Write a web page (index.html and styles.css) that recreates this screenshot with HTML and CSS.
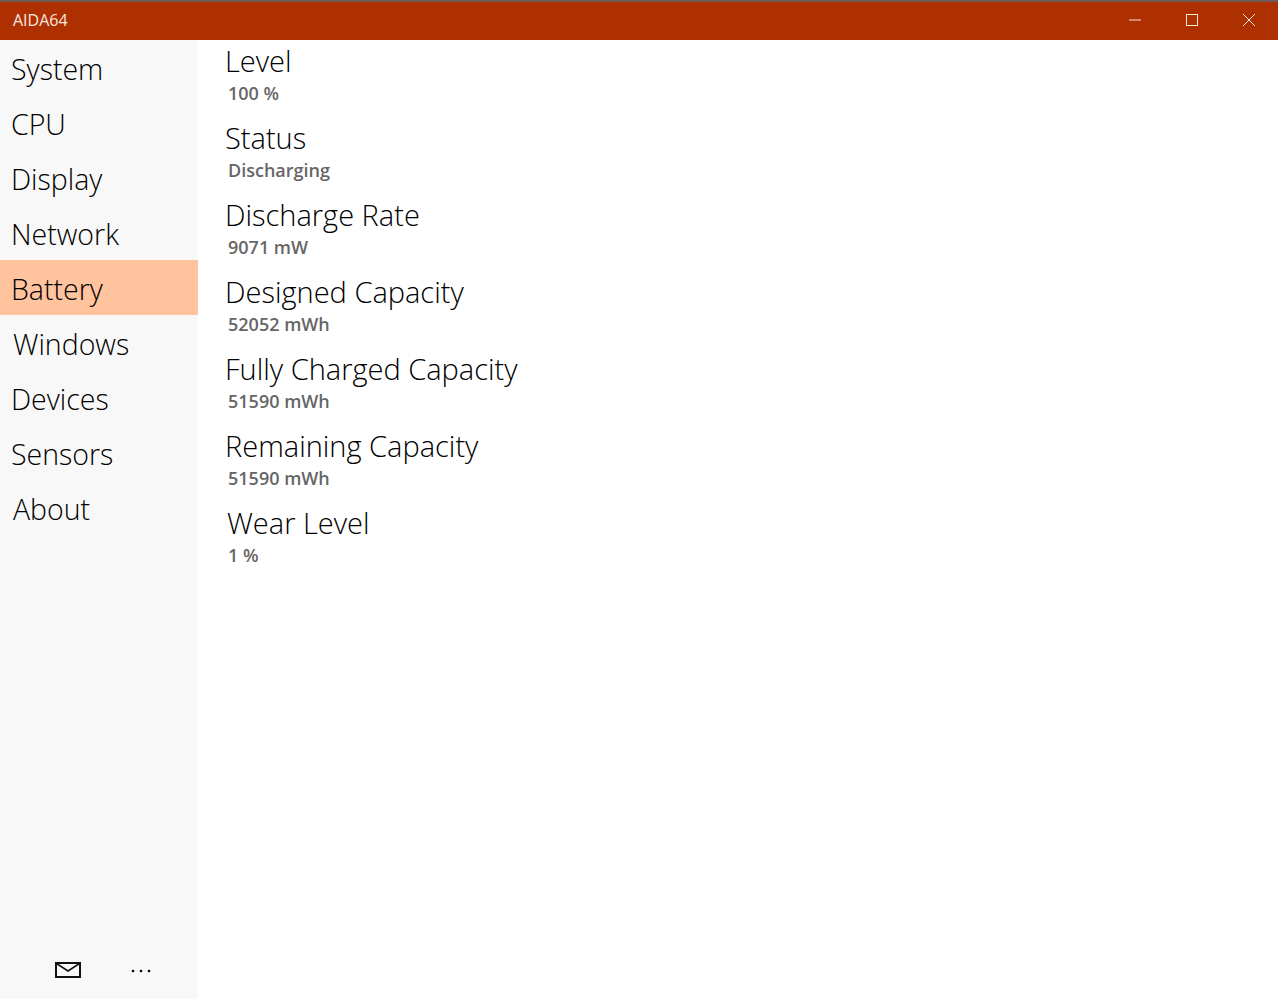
FILE: index.html
```html
<!DOCTYPE html>
<html lang="en">
<head>
<meta charset="utf-8">
<title>AIDA64</title>
<link rel="stylesheet" href="styles.css">
</head>
<body>
<div class="window">
  <header class="titlebar">
    <span class="app-title">AIDA64</span>
    <div class="controls">
      <span class="control"><svg width="14" height="14" viewBox="0 0 14 14"><path d="M1 7H13" stroke="#f7e6dc" stroke-width="1" fill="none"/></svg></span>
      <span class="control"><svg width="14" height="14" viewBox="0 0 14 14"><rect x="1.5" y="1.5" width="11" height="11" stroke="#f7e6dc" stroke-width="1" fill="none"/></svg></span>
      <span class="control"><svg width="14" height="14" viewBox="0 0 14 14"><path d="M1 1L13 13M13 1L1 13" stroke="#f7e6dc" stroke-width="1" fill="none"/></svg></span>
    </div>
  </header>
  <div class="body">
    <nav class="sidebar">
      <ul class="menu">
        <li class="item">System</li>
        <li class="item">CPU</li>
        <li class="item">Display</li>
        <li class="item">Network</li>
        <li class="item active">Battery</li>
        <li class="item indent">Windows</li>
        <li class="item">Devices</li>
        <li class="item">Sensors</li>
        <li class="item indent">About</li>
      </ul>
      <div class="footer">
        <svg class="mail" width="26" height="16" viewBox="0 0 26 16"><rect x="1" y="1" width="24" height="14" fill="none" stroke="#111" stroke-width="2"/><path d="M1.5 1.5L13 9L24.500 1.500" fill="none" stroke="#111" stroke-width="1.500"/></svg>
        <svg class="more" width="20" height="4" viewBox="0 0 20 4"><circle cx="2" cy="2" r="1.300" fill="#000"/><circle cx="10" cy="2" r="1.300" fill="#000"/><circle cx="18" cy="2" r="1.300" fill="#000"/></svg>
      </div>
    </nav>
    <main class="content">
      <section class="entry"><h2 class="label">Level</h2><p class="value">100 %</p></section>
      <section class="entry"><h2 class="label">Status</h2><p class="value">Discharging</p></section>
      <section class="entry"><h2 class="label">Discharge Rate</h2><p class="value">9071 mW</p></section>
      <section class="entry"><h2 class="label">Designed Capacity</h2><p class="value">52052 mWh</p></section>
      <section class="entry"><h2 class="label">Fully Charged Capacity</h2><p class="value">51590 mWh</p></section>
      <section class="entry"><h2 class="label">Remaining Capacity</h2><p class="value">51590 mWh</p></section>
      <section class="entry"><h2 class="label wear">Wear Level</h2><p class="value">1 %</p></section>
    </main>
  </div>
</div>
</body>
</html>
```
FILE: styles.css
```css
* { box-sizing: border-box; }
html, body { margin: 0; padding: 0; height: 100%; background: #fff; overflow: hidden; }
body { font-family: "Open Sans", "Noto Sans", sans-serif; color: #000; }
.window { display: flex; flex-direction: column; height: 999px; width: 1278px; }
.titlebar {
  height: 40px; flex: none; background: #ae2f00; border-top: 2px solid #6f5a58;
  display: flex; align-items: center; justify-content: space-between;
  padding-left: 13px; color: #f9e9e0;
}
.app-title { font-size: 16px; line-height: 34px; padding-bottom: 2px; }
.controls { display: flex; margin-right: 1px; padding-bottom: 2px; }
.control { width: 57px; height: 36px; display: flex; align-items: center; justify-content: center; }
.control svg { display: block; }
.body { flex: 1; display: flex; min-height: 0; }
.sidebar { width: 198px; flex: none; background: #f8f8f8; display: flex; flex-direction: column; justify-content: space-between; }
.menu { list-style: none; margin: 0; padding: 0; }
.item { height: 55px; line-height: 59px; padding-left: 11px; font-size: 28.5px; font-weight: 300; color: #000; }
.item.indent { padding-left: 13px; }
.item.active { background: #ffc39e; }
.footer { height: 58px; display: flex; align-items: center; padding: 0 47px 0 55px; justify-content: space-between; }
.more { margin-top: 2px; }
.content { flex: 1; padding-left: 27px; }
.entry { height: 77px; }
.label { margin: 0; font-size: 29px; font-weight: 300; line-height: 42px; color: #000; }
.label.wear { margin-left: 2px; }
.value { margin: 0 0 0 3px; font-size: 18px; font-weight: 600; line-height: 22px; color: #666; }
```
